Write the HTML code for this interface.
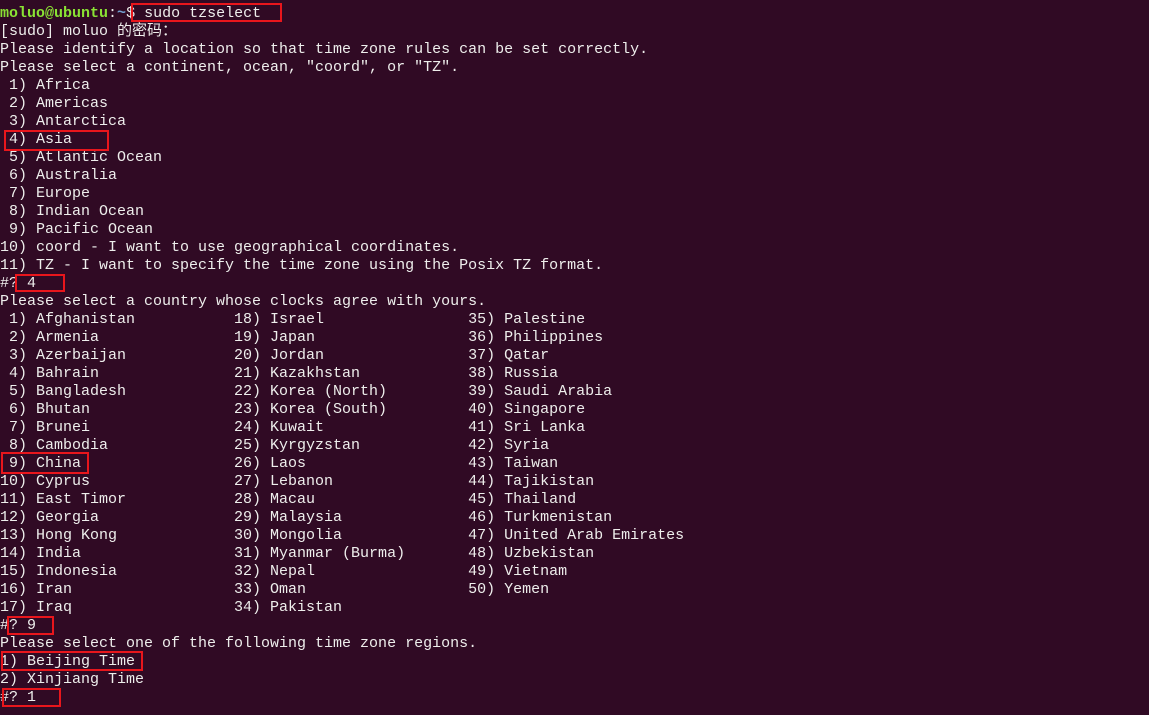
<!DOCTYPE html>
<html><head><meta charset="utf-8"><style>
html,body{margin:0;padding:0;width:1149px;height:715px;overflow:hidden;background:#300a24;}
pre{position:absolute;left:0;top:5px;margin:0;font-family:"Liberation Mono","Noto Sans CJK SC",monospace;font-size:15px;line-height:18px;color:#eeeeec;white-space:pre;}
.g{color:#8ae234;font-weight:bold}.b{color:#729fcf;font-weight:bold}
.r{position:absolute;border:2px solid #e8161c;box-sizing:border-box}
</style></head><body>
<pre><span class="g">moluo@ubuntu</span>:<span class="b">~</span>$ sudo tzselect
[sudo] moluo 的密码：
Please identify a location so that time zone rules can be set correctly.
Please select a continent, ocean, "coord", or "TZ".
 1) Africa
 2) Americas
 3) Antarctica
 4) Asia
 5) Atlantic Ocean
 6) Australia
 7) Europe
 8) Indian Ocean
 9) Pacific Ocean
10) coord - I want to use geographical coordinates.
11) TZ - I want to specify the time zone using the Posix TZ format.
#? 4
Please select a country whose clocks agree with yours.
 1) Afghanistan           18) Israel                35) Palestine
 2) Armenia               19) Japan                 36) Philippines
 3) Azerbaijan            20) Jordan                37) Qatar
 4) Bahrain               21) Kazakhstan            38) Russia
 5) Bangladesh            22) Korea (North)         39) Saudi Arabia
 6) Bhutan                23) Korea (South)         40) Singapore
 7) Brunei                24) Kuwait                41) Sri Lanka
 8) Cambodia              25) Kyrgyzstan            42) Syria
 9) China                 26) Laos                  43) Taiwan
10) Cyprus                27) Lebanon               44) Tajikistan
11) East Timor            28) Macau                 45) Thailand
12) Georgia               29) Malaysia              46) Turkmenistan
13) Hong Kong             30) Mongolia              47) United Arab Emirates
14) India                 31) Myanmar (Burma)       48) Uzbekistan
15) Indonesia             32) Nepal                 49) Vietnam
16) Iran                  33) Oman                  50) Yemen
17) Iraq                  34) Pakistan
#? 9
Please select one of the following time zone regions.
1) Beijing Time
2) Xinjiang Time
#? 1</pre>
<div class="r" style="left:131px;top:3px;width:151px;height:19px"></div>
<div class="r" style="left:4px;top:130px;width:105px;height:21px"></div>
<div class="r" style="left:15px;top:274px;width:50px;height:18px"></div>
<div class="r" style="left:1px;top:452px;width:88px;height:22px"></div>
<div class="r" style="left:7px;top:616px;width:47px;height:19px"></div>
<div class="r" style="left:1px;top:651px;width:142px;height:20px"></div>
<div class="r" style="left:2px;top:688px;width:59px;height:19px"></div>
</body></html>
